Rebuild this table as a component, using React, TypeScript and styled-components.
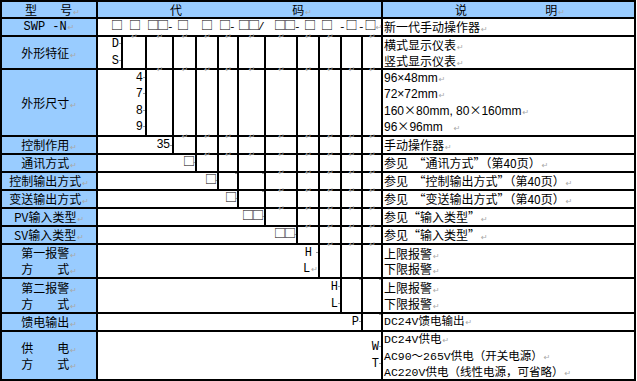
import { FC, ReactNode } from "react";
import styled, { createGlobalStyle } from "styled-components";

const GlobalStyle = createGlobalStyle`
  html, body {
    margin: 0;
    padding: 0;
    background: #fff;
  }
  body {
    font-family: "Noto Sans CJK SC", sans-serif;
    color: #000;
  }
`;

// widths of the twelve code positions, left to right
const CODE_WIDTHS = [23, 22, 25, 21, 20, 18, 25, 30, 20, 20, 19, 18];
const codeTracks = CODE_WIDTHS.map((w) => `${w}px`).join(" ");

type Mark = "ret" | "stub" | "";

const Sheet = styled.div`
  display: grid;
  grid-template-columns: 94px ${codeTracks} 251px;
  grid-template-rows: 15px 16px 31px 65px repeat(6, 16px) 32px 33px 16px 47px;
  gap: 2px;
  padding: 2px;
  width: 636px;
  box-sizing: border-box;
  background: #000;
  font-size: 12px;
`;

const Head = styled.div<{ $left: number; $right: number; $span?: number }>`
  grid-column: span ${(p) => p.$span ?? 1};
  background: #99ccff;
  display: flex;
  justify-content: space-between;
  align-items: center;
  padding: 0 ${(p) => p.$right}px 0 ${(p) => p.$left}px;
  line-height: 15px;
  white-space: nowrap;
`;

const Label = styled.div`
  background: #99ccff;
  display: flex;
  flex-direction: column;
  justify-content: center;
  align-items: center;
  line-height: 16px;
  white-space: nowrap;
`;

const Latin = styled.span`
  font-family: "Liberation Mono", monospace;
  font-size: 12px;
`;

const CodeStrip = styled.div`
  grid-column: span 12;
  background: #fff;
  display: grid;
  grid-template-columns: ${codeTracks};
  column-gap: 2px;
  align-items: center;
  font-family: "Liberation Mono", monospace;
  font-size: 11px;
  line-height: 16px;
`;

const Piece = styled.span<{ $dx: number }>`
  margin-left: ${(p) => p.$dx}px;
  white-space: nowrap;
`;

const Value = styled.div<{ $span: number }>`
  grid-column: span ${(p) => p.$span};
  background: #fff;
  display: flex;
  flex-direction: column;
  justify-content: center;
  align-items: flex-end;
  font-family: "Liberation Mono", monospace;
  font-size: 12px;
  line-height: 16.5px;
  white-space: nowrap;
`;

const Num = styled.span`
  font-family: "Liberation Sans", sans-serif;
`;

const Blank = styled.div<{ $kind: Mark }>`
  background: #fff;
  display: flex;
  justify-content: ${(p) => (p.$kind === "stub" ? "flex-end" : "center")};
  align-items: flex-start;
  line-height: 16px;
`;

const Desc = styled.div<{ $top?: boolean; $font?: "sans" | "mono" }>`
  background: #fff;
  display: flex;
  flex-direction: column;
  justify-content: ${(p) => (p.$top ? "flex-start" : "center")};
  padding-left: 1px;
  font-family: ${(p) =>
    p.$font === "sans"
      ? `"Liberation Sans", "Noto Sans CJK SC", sans-serif`
      : p.$font === "mono"
        ? `"Liberation Mono", "Noto Sans CJK SC", monospace`
        : `"Noto Sans CJK SC", sans-serif`};
  font-size: ${(p) => (p.$font === "mono" ? "11.5px" : "12px")};
  line-height: ${(p) => (p.$top || p.$font === "sans" ? "16.5px" : "15.5px")};
  white-space: nowrap;
`;

const Square = styled.span`
  font-family: "Noto Sans CJK SC", sans-serif;
  font-size: 12px;
  letter-spacing: -2px;
  line-height: 0;
`;

const WideX = styled.span`
  font-family: "Noto Sans CJK SC", sans-serif;
  line-height: 0;
`;

const RetMark = styled.span`
  font-family: "DejaVu Sans", sans-serif;
  font-size: 8px;
  line-height: 0;
  color: #a8a8a8;
  margin-left: 1px;
`;

const Stub = styled.span<{ $gap?: boolean }>`
  display: inline-block;
  width: 2px;
  height: 1px;
  margin-left: ${(p) => (p.$gap ? 4 : 0)}px;
  background: #999;
  vertical-align: middle;
`;

const Sq: FC = () => <Square>□</Square>;

const codeText = (s: string) =>
  Array.from(s).map((c, i) => (c === "□" ? <Sq key={i} /> : c));

const Ret: FC = () => <RetMark>↵</RetMark>;

const Wide: FC = () => <WideX>×</WideX>;

type CodeRow = {
  label: string[];
  span: number;
  lines: ReactNode[];
  blanks: Mark[];
  desc: ReactNode[];
  descFont?: "sans" | "mono";
  top?: boolean;
};

const rows: CodeRow[] = [
  {
    label: ["外形特征"],
    span: 1,
    lines: [<>D<Stub /></>, <>S<Stub /></>],
    blanks: ["ret", "ret", "ret", "ret", "ret", "ret", "ret", "ret", "ret", "", "ret"],
    desc: ["横式显示仪表", "竖式显示仪表"],
  },
  {
    label: ["外形尺寸"],
    span: 2,
    lines: ["4", "7", "8", "9"].map((d) => <>{d}<Stub /></>),
    blanks: Array(10).fill("ret"),
    desc: [
      "96×48mm",
      "72×72mm",
      <>160<Wide />80mm, 80<Wide />160mm</>,
      <>96<Wide />96mm{"\u00a0\u00a0\u00a0"}</>,
    ],
    descFont: "sans",
  },
  {
    label: ["控制作用"],
    span: 3,
    lines: [<Num>35<Stub /></Num>],
    blanks: Array(9).fill("ret"),
    desc: ["手动操作器"],
  },
  {
    label: ["通讯方式"],
    span: 4,
    lines: [<><Sq /><Stub /></>],
    blanks: Array(8).fill("ret"),
    desc: ["参见\u00a0\u00a0“通讯方式”（第40页）"],
  },
  {
    label: ["控制输出方式"],
    span: 5,
    lines: [<><Sq /><Stub /></>],
    blanks: ["stub", "stub", "ret", "ret", "ret", "ret", "ret"],
    desc: ["参见\u00a0\u00a0“控制输出方式”（第40页）"],
  },
  {
    label: ["变送输出方式"],
    span: 6,
    lines: [<><Sq /><Stub /></>],
    blanks: ["stub", "ret", "ret", "ret", "ret", "ret"],
    desc: ["参见\u00a0\u00a0“变送输出方式”（第40页）"],
  },
  {
    label: ["PV输入类型"],
    span: 7,
    lines: [<><Sq /><Sq /><Stub /></>],
    blanks: Array(5).fill("ret"),
    desc: ["参见“输入类型”"],
  },
  {
    label: ["SV输入类型"],
    span: 8,
    lines: [<><Sq /><Sq /><Stub /></>],
    blanks: Array(4).fill("ret"),
    desc: ["参见“输入类型”"],
  },
  {
    label: ["第一报警", "方　　式"],
    span: 9,
    lines: [<>H<Stub $gap /></>, <>L<Ret /></>],
    blanks: Array(3).fill("ret"),
    desc: ["上限报警", "下限报警"],
  },
  {
    label: ["第二报警", "方　　式"],
    span: 10,
    lines: [<>H<Stub /></>, <>L<Stub /></>],
    blanks: ["stub", "stub"],
    desc: ["上限报警", "下限报警"],
  },
  {
    label: ["馈电输出"],
    span: 11,
    lines: [<>P<Stub /></>],
    blanks: ["stub"],
    desc: ["DC24V馈电输出"],
    descFont: "mono",
  },
  {
    label: ["供　　电", "方　　式"],
    span: 12,
    lines: [<>W<Stub /></>, <>T<Stub /></>],
    blanks: [],
    desc: ["DC24V供电", "AC90～265V供电（开关电源）", "AC220V供电（线性电源，可省略）"],
    descFont: "mono",
    top: true,
  },
];

// model string pieces, one per code position, with a small nudge
const swpPieces: [string, number][] = [
  ["□", 13],
  ["□", 6],
  ["□□-", 0],
  ["□", 3],
  ["□", 4],
  ["□-", 0],
  ["□□/", -1],
  ["□□-", 8],
  ["□", 6],
  ["□", 1],
  ["-□", -3],
  ["-□", -5],
];

const App: FC = () => (
  <>
    <GlobalStyle />
    <Sheet>
      <Head $left={23} $right={16}>
        <span>型</span>
        <span>
          号<Ret />
        </span>
      </Head>
      <Head $left={72} $right={69} $span={12}>
        <span>代</span>
        <span>
          码<Ret />
        </span>
      </Head>
      <Head $left={72} $right={69}>
        <span>说</span>
        <span>
          明<Ret />
        </span>
      </Head>

      <Label>
        <Latin>
          SWP -N<Ret />
        </Latin>
      </Label>
      <CodeStrip>
        {swpPieces.map(([s, dx], i) => (
          <Piece key={i} $dx={dx}>
            {codeText(s)}
            {i === swpPieces.length - 1 && <Ret />}
          </Piece>
        ))}
      </CodeStrip>
      <Desc>
        <span>
          新一代手动操作器<Ret />
        </span>
      </Desc>

      {rows.map((row, r) => [
        <Label key={`l${r}`}>
          {row.label.map((t, i) => (
            <span key={i}>
              {t}
              <Ret />
            </span>
          ))}
        </Label>,
        <Value key={`v${r}`} $span={row.span}>
          {row.lines.map((l, i) => (
            <span key={i}>{l}</span>
          ))}
        </Value>,
        ...row.blanks.map((b, i) => (
          <Blank key={`b${r}-${i}`} $kind={b}>
            {b === "ret" && <Ret />}
            {b === "stub" && <Stub />}
          </Blank>
        )),
        <Desc key={`d${r}`} $top={row.top} $font={row.descFont}>
          {row.desc.map((d, i) => (
            <span key={i}>
              {d}
              <Ret />
            </span>
          ))}
        </Desc>,
      ])}
    </Sheet>
  </>
);

export default App;
